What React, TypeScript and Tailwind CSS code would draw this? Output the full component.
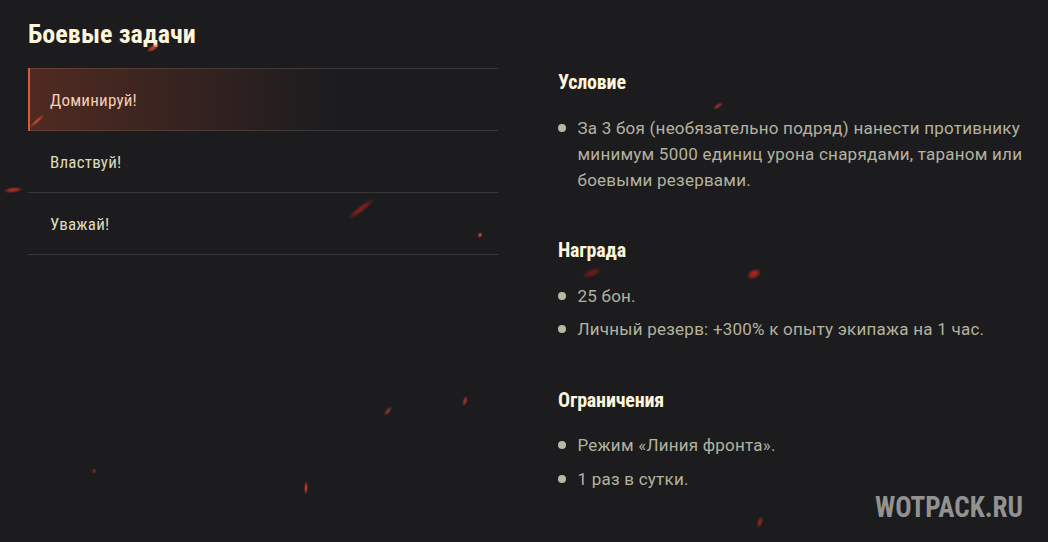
import { clsx } from "clsx";

interface Section {
  title: string;
  items: string[];
  className: string;
  listClassName: string;
}

interface Spark {
  x: number;
  y: number;
  length: number;
  width: number;
  angle: number;
  color: string;
  opacity: number;
}

const missions = ["Доминируй!", "Властвуй!", "Уважай!"];

const sections: Section[] = [
  {
    title: "Условие",
    items: [
      "За 3 боя (необязательно подряд) нанести противнику минимум 5000 единиц урона снарядами, тараном или боевыми резервами.",
    ],
    className: "h-[168px]",
    listClassName: "mt-[21px]",
  },
  {
    title: "Награда",
    items: ["25 бон.", "Личный резерв: +300% к опыту экипажа на 1 час."],
    className: "h-[150px]",
    listClassName: "mt-[21px] space-y-[7px]",
  },
  {
    title: "Ограничения",
    items: ["Режим «Линия фронта».", "1 раз в сутки."],
    className: "h-[120px]",
    listClassName: "mt-5 space-y-2",
  },
];

const sparks: Spark[] = [
  { x: 153, y: 48, length: 14, width: 6, angle: -30, color: "#d5452f", opacity: 0.9 },
  { x: 37, y: 121, length: 20, width: 4, angle: -42, color: "#d0492e", opacity: 0.9 },
  { x: 13, y: 190, length: 20, width: 6, angle: -6, color: "#b62f22", opacity: 0.95 },
  { x: 361, y: 209, length: 34, width: 7, angle: -38, color: "#8c211c", opacity: 0.9 },
  { x: 480, y: 235, length: 6, width: 5, angle: -60, color: "#c84a3a", opacity: 0.95 },
  { x: 718, y: 106, length: 12, width: 5, angle: -33, color: "#a03226", opacity: 0.9 },
  { x: 592, y: 273, length: 21, width: 9, angle: -22, color: "#761c17", opacity: 0.85 },
  { x: 754, y: 274, length: 16, width: 10, angle: -28, color: "#b32720", opacity: 0.95 },
  { x: 388, y: 411, length: 12, width: 5, angle: -52, color: "#853829", opacity: 0.95 },
  { x: 465, y: 401, length: 11, width: 5, angle: -72, color: "#a33529", opacity: 0.95 },
  { x: 306, y: 488, length: 14, width: 4, angle: -88, color: "#c23f2c", opacity: 0.95 },
  { x: 94, y: 471, length: 6, width: 5, angle: -60, color: "#853027", opacity: 0.8 },
  { x: 760, y: 522, length: 12, width: 6, angle: -72, color: "#9c2720", opacity: 0.9 },
];

const Sparks = () => (
  <svg className="pointer-events-none absolute inset-0" width="1048" height="542">
    <defs>
      {sparks.map((s, i) => (
        <radialGradient key={i} id={`spark-${i}`}>
          <stop offset="0" stopColor={s.color} />
          <stop offset="0.4" stopColor={s.color} stopOpacity="0.85" />
          <stop offset="1" stopColor={s.color} stopOpacity="0" />
        </radialGradient>
      ))}
    </defs>
    {sparks.map((s, i) => (
      <ellipse
        key={i}
        rx={s.length / 2}
        ry={s.width / 2}
        fill={`url(#spark-${i})`}
        opacity={s.opacity}
        transform={`translate(${s.x} ${s.y}) rotate(${s.angle})`}
      />
    ))}
  </svg>
);

const MissionList = () => (
  <ul className="mt-[17px] w-[470px] border-t border-[#38383a]">
    {missions.map((name, i) => (
      <li
        key={name}
        className={clsx(
          "relative flex h-[62px] items-center border-b border-[#38383a] pt-0.5 pl-[22px] text-[17px] tracking-[0.2px]",
          i === 0 ? "text-[#f5cdb5]" : "text-[#dfdab8]"
        )}
      >
        {i === 0 && (
          <span className="absolute -top-px -bottom-px left-0 w-full border-l-2 border-[#d9593d] bg-linear-to-r from-[#e5532b]/26 to-[#e5532b]/0 to-65%" />
        )}
        <span className="relative">{name}</span>
      </li>
    ))}
  </ul>
);

const InfoSection = ({ title, items, className, listClassName }: Section) => (
  <section className={className}>
    <h2 className="font-['Roboto_Condensed',Roboto,sans-serif] text-[20px] leading-6 font-bold tracking-[-0.18px] text-[#fdf5dc] [font-stretch:75%]">
      {title}
    </h2>
    <ul className={listClassName}>
      {items.map((item) => (
        <li key={item} className="flex font-[Roboto,sans-serif] text-[17px] leading-[26px] tracking-[0.23px] text-[#b3b29f]">
          <span className="mt-[9px] mr-[11.5px] size-2 shrink-0 rounded-full bg-[#b8b8a4]" />
          <span>{item}</span>
        </li>
      ))}
    </ul>
  </section>
);

export default function App() {
  return (
    <main className="relative flex h-[542px] w-[1048px] overflow-hidden bg-[#1c1c1e]">
      <div className="relative ml-7 w-[470px] pt-[17px] font-['Roboto_Condensed',Roboto,sans-serif] [font-stretch:75%]">
        <h1 className="text-[26px] leading-[34px] font-bold tracking-[0.1px] text-[#fdf5dc]">Боевые задачи</h1>
        <MissionList />
      </div>
      <div className="relative ml-[60px] w-[470px] pt-[70px]">
        {sections.map((section) => (
          <InfoSection key={section.title} {...section} />
        ))}
      </div>
      <Sparks />
      <div className="absolute top-[490px] left-[875px] origin-left scale-x-[0.935] font-['Roboto_Condensed',Roboto,sans-serif] text-[29px] leading-[34px] font-bold text-[#929292] [font-stretch:75%]">
        WOTPACK.RU
      </div>
    </main>
  );
}
